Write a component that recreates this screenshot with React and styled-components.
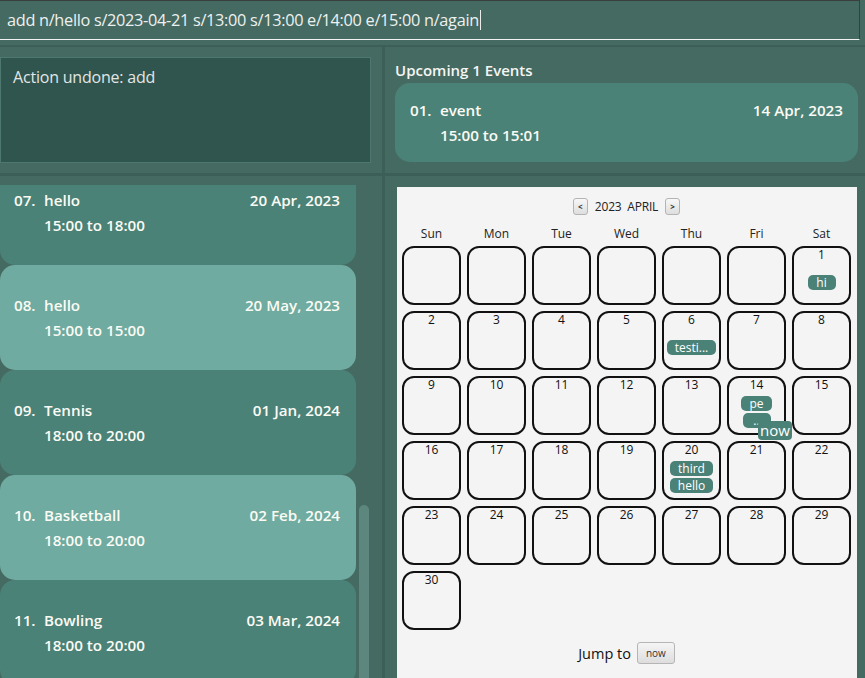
import styled, { createGlobalStyle } from "styled-components";

const GlobalStyle = createGlobalStyle`
  html, body {
    margin: 0;
    padding: 0;
    background: #456a62;
  }
  * {
    box-sizing: border-box;
  }
`;

const events = [
  { idx: "07.", name: "hello", date: "20 Apr, 2023", time: "15:00 to 18:00" },
  { idx: "08.", name: "hello", date: "20 May, 2023", time: "15:00 to 15:00" },
  { idx: "09.", name: "Tennis", date: "01 Jan, 2024", time: "18:00 to 20:00" },
  { idx: "10.", name: "Basketball", date: "02 Feb, 2024", time: "18:00 to 20:00" },
  { idx: "11.", name: "Bowling", date: "03 Mar, 2024", time: "18:00 to 20:00" },
];

const dayNames = ["Sun", "Mon", "Tue", "Wed", "Thu", "Fri", "Sat"];

const chipsByDay = {
  1: ["hi"],
  6: ["testi..."],
  14: ["pe", ".."],
  20: ["third", "hello"],
};

// 6 empty slots before April 1st 2023 (a Saturday)
const cells = [...Array(6).fill(null), ...Array.from({ length: 30 }, (_, i) => i + 1)];

export default function App() {
  return (
    <Window>
      <GlobalStyle />
      <CommandBar>
        <CommandText>add n/hello s/2023-04-21 s/13:00 s/13:00 e/14:00 e/15:00 n/again</CommandText>
        <Caret />
      </CommandBar>
      <Main>
        <ResultCell>
          <ResultBox>Action undone: add</ResultBox>
        </ResultCell>
        <UpcomingCell>
          <SectionTitle>Upcoming 1 Events</SectionTitle>
          <EventCard $tone="dark" $upcoming>
            <EventRow>
              <Index>01.</Index>
              <Name>event</Name>
              <DateText>14 Apr, 2023</DateText>
            </EventRow>
            <TimeText>15:00 to 15:01</TimeText>
          </EventCard>
        </UpcomingCell>
        <ListCell>
          <ListViewport>
            <ListInner>
              {events.map((e, i) => (
                <EventCard key={e.idx} $tone={i % 2 === 0 ? "dark" : "light"}>
                  <EventRow>
                    <Index>{e.idx}</Index>
                    <Name>{e.name}</Name>
                    <DateText>{e.date}</DateText>
                  </EventRow>
                  <TimeText>{e.time}</TimeText>
                </EventCard>
              ))}
            </ListInner>
          </ListViewport>
          <ScrollTrack>
            <ScrollThumb />
          </ScrollTrack>
        </ListCell>
        <CalendarCell>
          <Calendar>
            <MonthHeader>
              <NavButton>&lt;</NavButton>
              <MonthLabel>2023&nbsp;&nbsp;APRIL</MonthLabel>
              <NavButton>&gt;</NavButton>
            </MonthHeader>
            <DayNames>
              {dayNames.map((d) => (
                <DayName key={d}>{d}</DayName>
              ))}
            </DayNames>
            <Grid>
              {cells.map((day, i) => (
                <DayCell key={i}>
                  <DayNumber>{day}</DayNumber>
                  <ChipArea>
                    {(chipsByDay[day] || []).map((c) => (
                      <Chip key={c}>{c}</Chip>
                    ))}
                  </ChipArea>
                  {day === 14 && <NowBadge>now</NowBadge>}
                </DayCell>
              ))}
            </Grid>
            <JumpRow>
              <JumpLabel>Jump to</JumpLabel>
              <SmallButton>now</SmallButton>
            </JumpRow>
          </Calendar>
        </CalendarCell>
      </Main>
    </Window>
  );
}

const Window = styled.div`
  width: 865px;
  height: 678px;
  overflow: hidden;
  background: #456a62;
  display: flex;
  flex-direction: column;
  font-family: "Open Sans", "Noto Sans", sans-serif;
`;

const CommandBar = styled.div`
  width: 860px;
  height: 40px;
  flex: none;
  display: flex;
  align-items: center;
  padding-left: 7px;
  background: #456a62;
  border-top: 1px solid #3a3f3d;
  border-right: 1px solid #3a3f3d;
  border-bottom: 1px solid #f2f2f2;
`;

const CommandText = styled.span`
  color: #eef1ef;
  font-size: 16.3px;
  letter-spacing: -0.3px;
  white-space: nowrap;
`;

const Caret = styled.span`
  display: inline-block;
  width: 1px;
  height: 20px;
  background: #e8ecea;
  margin-left: 1px;
`;

const Main = styled.div`
  flex: 1;
  margin-top: 5px;
  border-top: 2px solid #3c5f57;
  display: grid;
  grid-template-columns: 382px 1fr;
  grid-template-rows: 126px 1fr;
  gap: 3px;
  background: #3c5f57;
  min-height: 0;
`;

const ResultCell = styled.div`
  background: #456a62;
  padding-top: 10px;
`;

const ResultBox = styled.div`
  width: 371px;
  height: 106px;
  background: #30544e;
  border: 1px solid #4e776f;
  padding: 9px 12px;
  color: #e2e6e4;
  font-size: 16px;
  line-height: 20px;
  letter-spacing: -0.2px;
`;

const UpcomingCell = styled.div`
  background: #456a62;
  padding: 13px 7px 0 10px;
`;

const SectionTitle = styled.div`
  color: #f4f6f4;
  font-size: 15px;
  font-weight: 600;
  line-height: 20px;
  margin-bottom: 3px;
`;

const EventCard = styled.div`
  background: ${(p) => (p.$tone === "light" ? "#6faba1" : "#4b8278")};
  border-radius: 15px;
  height: ${(p) => (p.$upcoming ? "79px" : "105px")};
  padding: ${(p) => (p.$upcoming ? "15px 15px 0 15px" : "28px 16px 0 14px")};
  color: #fbfbf4;
  font-size: 15.2px;
  font-weight: 600;
  line-height: 25px;
`;

const EventRow = styled.div`
  display: flex;
  align-items: center;
`;

const Index = styled.span`
  width: 30px;
  flex: none;
`;

const Name = styled.span`
  flex: 1;
`;

const DateText = styled.span`
  white-space: nowrap;
`;

const TimeText = styled.div`
  margin-left: 30px;
`;

const ListCell = styled.div`
  background: #456a62;
  padding-top: 9px;
  display: flex;
  min-height: 0;
  overflow: hidden;
`;

const ListViewport = styled.div`
  width: 356px;
  flex: none;
  overflow: hidden;
`;

const ListInner = styled.div`
  margin-top: -25px;
`;

const ScrollTrack = styled.div`
  flex: 1;
  padding: 320px 0 0 3px;
`;

const ScrollThumb = styled.div`
  width: 10px;
  height: 400px;
  border-radius: 5px;
  background: #5d877e;
`;

const CalendarCell = styled.div`
  background: #456a62;
  padding: 11px 0 0 12px;
  min-height: 0;
  overflow: hidden;
`;

const Calendar = styled.div`
  width: 460px;
  height: 100%;
  background: #f4f4f4;
  padding: 11px 6px 0 5px;
`;

const MonthHeader = styled.div`
  display: flex;
  justify-content: center;
  align-items: center;
  height: 17px;
  gap: 7px;
`;

const NavButton = styled.div`
  width: 15px;
  height: 17px;
  border: 1px solid #b4b4b4;
  border-radius: 3px;
  background: linear-gradient(#f7f7f7, #dedede);
  font-size: 8px;
  font-weight: 700;
  color: #333;
  display: flex;
  align-items: center;
  justify-content: center;
`;

const MonthLabel = styled.span`
  font-size: 12px;
  color: #222;
  letter-spacing: -0.2px;
`;

const DayNames = styled.div`
  display: grid;
  grid-template-columns: repeat(7, 59px);
  column-gap: 6px;
  margin-top: 11px;
`;

const DayName = styled.div`
  text-align: center;
  font-size: 12px;
  line-height: 16px;
  color: #222;
`;

const Grid = styled.div`
  display: grid;
  grid-template-columns: repeat(7, 59px);
  grid-auto-rows: 59px;
  gap: 6px;
  margin-top: 4px;
`;

const DayCell = styled.div`
  position: relative;
  border: 2px solid #111;
  border-radius: 12px;
  display: flex;
  flex-direction: column;
  align-items: center;
`;

const DayNumber = styled.div`
  font-size: 12px;
  line-height: 14px;
  height: 14px;
  color: #111;
`;

const ChipArea = styled.div`
  flex: 1;
  display: flex;
  flex-direction: column;
  align-items: center;
  justify-content: center;
  gap: 2px;
  padding-bottom: 1px;
`;

const Chip = styled.div`
  background: #4b8278;
  color: #fff;
  border-radius: 5px;
  height: 15px;
  min-width: 28px;
  padding: 0 8px;
  font-size: 12px;
  line-height: 15px;
  text-align: center;
  white-space: nowrap;
`;

const NowBadge = styled.div`
  position: absolute;
  left: 29px;
  top: 43px;
  z-index: 2;
  background: #4b8278;
  color: #fff;
  border-radius: 4px;
  height: 19px;
  padding: 0 2px;
  font-size: 15px;
  line-height: 18px;
`;

const JumpRow = styled.div`
  display: flex;
  justify-content: center;
  align-items: center;
  gap: 6px;
  margin-top: 12px;
  height: 22px;
`;

const JumpLabel = styled.span`
  font-size: 14.5px;
  color: #111;
`;

const SmallButton = styled.div`
  height: 22px;
  padding: 0 8px;
  border: 1px solid #b5b5b5;
  border-radius: 3px;
  background: linear-gradient(#f5f5f5, #dddddd);
  font-size: 10px;
  color: #333;
  display: flex;
  align-items: center;
`;
